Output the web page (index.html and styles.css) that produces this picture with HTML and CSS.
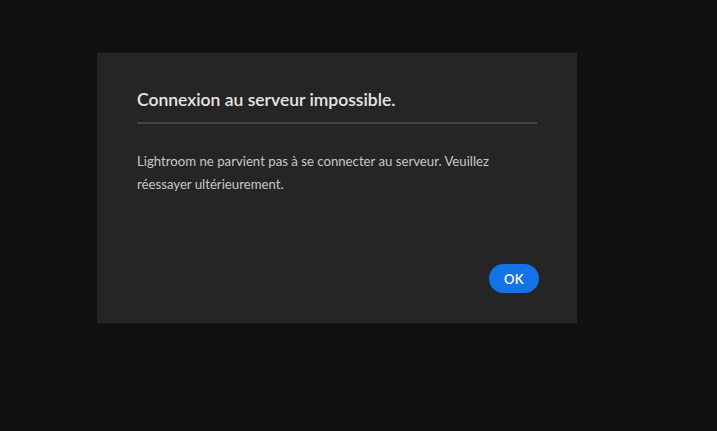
FILE: index.html
```html
<!DOCTYPE html>
<html lang="fr">

<head>
    <meta charset="UTF-8">
    <meta name="viewport" content="width=device-width, initial-scale=1.0">
    <title>Lightroom</title>
    <link rel="stylesheet" href="styles.css">
</head>

<body>
    <div id="dialog">
        <h1 id="dialog-title">Connexion au serveur impossible.</h1>
        <p id="dialog-text">Lightroom ne parvient pas à se connecter au serveur. Veuillez réessayer ultérieurement.</p>
        <div id="dialog-actions">
            <button id="ok-button">OK</button>
        </div>
    </div>
</body>

</html>
```

FILE: styles.css
```css
body {
    font-family: Lato, "Open Sans", sans-serif;
    background-color: #111;
    color: #fff;
    margin: 0;
    padding: 53px 0 0 97px;
    height: 100vh;
    box-sizing: border-box;
}

#dialog {
    background-color: #252525;
    width: 480px;
    height: 270px;
    box-sizing: border-box;
    padding: 36px 38px 30px 40px;
    display: flex;
    flex-direction: column;
}

#dialog-title {
    margin: 0 2px 0 0;
    font-size: 17.5px;
    font-weight: 600;
    color: #e6e6e6;
    line-height: 22px;
    padding-bottom: 11px;
    border-bottom: 2px solid #444;
}

#dialog-text {
    margin: 26px 0 0 0;
    font-size: 13.2px;
    line-height: 23px;
    color: #c8c8c8;
    width: 370px;
}

#dialog-actions {
    margin-top: auto;
    display: flex;
    justify-content: flex-end;
}

#ok-button {
    background-color: #1473e6;
    color: #fff;
    border: none;
    border-radius: 15px;
    height: 29px;
    width: 50px;
    font-family: inherit;
    font-size: 13px;
    font-weight: 600;
    letter-spacing: 0.5px;
    cursor: pointer;
}
```
